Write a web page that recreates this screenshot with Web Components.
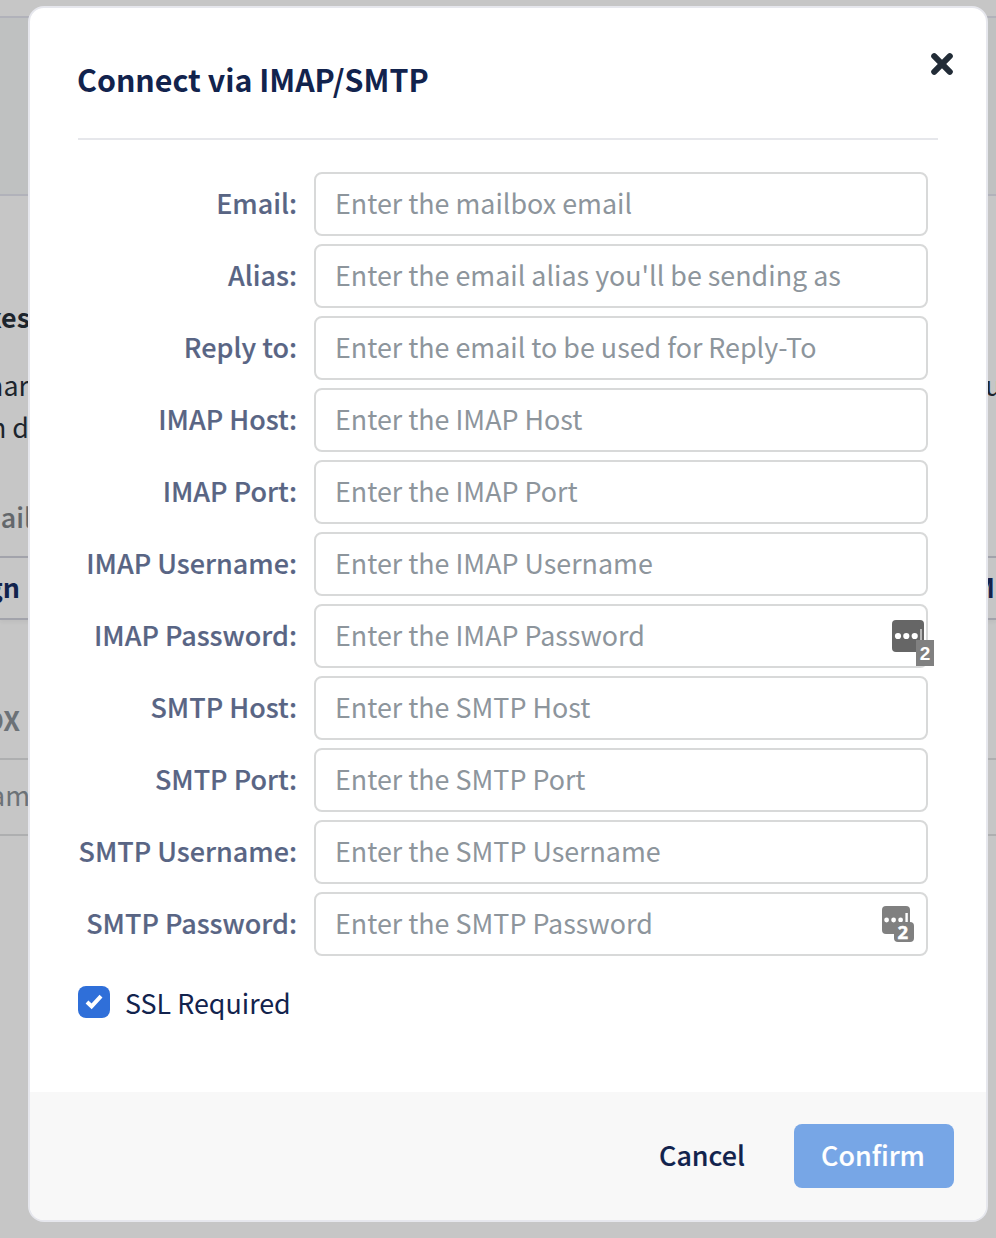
<!DOCTYPE html>
<html lang="en">
<head>
<meta charset="utf-8">
<title>Connect via IMAP/SMTP</title>
<style>
  html, body { margin: 0; height: 100%; overflow: hidden; }
  body {
    background: #c6c6c6;
    color: #12234d;
    font: 26.85px/42px "Noto Sans CJK SC", "Noto Sans", sans-serif;
  }
</style>
</head>
<body>
<mailbox-page></mailbox-page>

<connect-modal>
  <span slot="title">Connect via IMAP/SMTP</span>
  <form-field label="Email:">Enter the mailbox email</form-field>
  <form-field label="Alias:">Enter the email alias you'll be sending as</form-field>
  <form-field label="Reply to:">Enter the email to be used for Reply-To</form-field>
  <form-field label="IMAP Host:">Enter the IMAP Host</form-field>
  <form-field label="IMAP Port:">Enter the IMAP Port</form-field>
  <form-field label="IMAP Username:">Enter the IMAP Username</form-field>
  <form-field label="IMAP Password:">Enter the IMAP Password<password-badge slot="badge" kind="large"></password-badge></form-field>
  <form-field label="SMTP Host:">Enter the SMTP Host</form-field>
  <form-field label="SMTP Port:">Enter the SMTP Port</form-field>
  <form-field label="SMTP Username:">Enter the SMTP Username</form-field>
  <form-field label="SMTP Password:">Enter the SMTP Password<password-badge slot="badge" kind="small"></password-badge></form-field>
  <check-box slot="options">SSL Required</check-box>
  <modal-button slot="actions">Cancel</modal-button>
  <modal-button slot="actions" primary>Confirm</modal-button>
</connect-modal>

<script>
function define(name, html, setup) {
  const template = document.createElement('template');
  template.innerHTML = html;
  customElements.define(name, class extends HTMLElement {
    connectedCallback() {
      if (this.shadowRoot) return;
      const shadow = this.attachShadow({ mode: 'open' });
      shadow.appendChild(template.content.cloneNode(true));
      if (setup) setup(this, shadow);
    }
  });
}

// One line of the page behind the dialog, only its two ends are visible
define('page-row', `
  <style>
    :host { display: flex; justify-content: space-between; align-items: center; box-sizing: border-box; color: #1d252d; white-space: nowrap; }
    div { display: flex; }
    .start { width: 28px; justify-content: flex-end; }
    .end { width: 8px; }
  </style>
  <div class="start"><slot></slot></div>
  <div class="end"><slot name="end"></slot></div>
`);

define('mailbox-page', `
  <style>
    :host { display: flex; flex-direction: column; height: 100%; }
    .band { height: 180px; box-sizing: border-box; margin-top: 16px; background: #bfc1c1; border: solid #b1b2ba; border-width: 2px 0; }
    .heading { height: 42px; margin-top: 100px; font-weight: 700; }
    .text { height: 42px; }
    .heading + .text { margin-top: 26px; }
    .label { height: 42px; margin-top: 48px; color: #63676b; font-weight: 500; -webkit-text-stroke: .15px; }
    .tabs { height: 64px; margin-top: 18px; border: solid #a2a3ab; border-width: 2px 0; color: #12234d; font-weight: 700; padding-bottom: 2px; box-shadow: 0 2px 4px rgba(0, 0, 0, .05); }
    .column { height: 140px; border-bottom: 2px solid #aeafb0; color: #6c7277; font-weight: 700; padding-top: 62px; }
    .cell { height: 76px; border-bottom: 2px solid #aeafb0; color: #6c7277; padding-bottom: 4px; }
    .back { margin-right: 8px; }
    .over { margin-right: -2px; }
    .m { margin-left: -16px; }
    .u { margin-left: -3px; }
  </style>
  <div class="band"></div>
  <page-row class="heading"><span class="over">xes</span></page-row>
  <page-row class="text"><span style="margin-right:-1px">nar</span><span slot="end" class="u">u</span></page-row>
  <page-row class="text"><span style="margin-right:-1px">n d</span></page-row>
  <page-row class="label"><span style="margin-right:-4px">ail</span></page-row>
  <page-row class="tabs"><span class="back">gn</span><span slot="end" class="m">M</span></page-row>
  <page-row class="column"><span class="back">OX</span></page-row>
  <page-row class="cell"><span style="margin-right:-2px">am</span></page-row>
`);

define('connect-modal', `
  <style>
    :host {
      position: absolute; left: 28px; top: 6px;
      display: flex; flex-direction: column; box-sizing: border-box;
      width: 960px; height: 1216px;
      background: #fff; border: 2px solid #e6e7ed; border-radius: 16px; overflow: hidden;
    }
    header { display: flex; justify-content: space-between; height: 130px; margin: 0 48px; border-bottom: 2px solid #e6e7eb; }
    h1 { margin: 50px 0 0 -1px; font-size: 30.35px; line-height: 42px; font-weight: 700; }
    header svg { width: 24px; height: 24px; margin: 44px -16px 0 0; }
    main { flex: 1; padding: 32px 58px 0 48px; }
    .fields { display: flex; flex-direction: column; gap: 8px; margin-bottom: 30px; }
    footer { display: flex; justify-content: flex-end; align-items: center; gap: 22px; height: 128px; padding-right: 32px; background: #f8f8f8; }
  </style>
  <header>
    <h1><slot name="title"></slot></h1>
    <svg viewBox="0 0 24 24"><path d="M4.2 4.2 19.8 19.8M19.8 4.2 4.2 19.8" stroke="#222c37" stroke-width="6" stroke-linecap="round"/></svg>
  </header>
  <main>
    <div class="fields"><slot></slot></div>
    <slot name="options"></slot>
  </main>
  <footer><slot name="actions"></slot></footer>
`);

define('form-field', `
  <style>
    :host { display: flex; align-items: center; }
    label { flex: none; width: 219px; margin-right: 17px; padding-bottom: 2px; white-space: nowrap; color: #596584; font-size: 26.95px; font-weight: 500; -webkit-text-stroke: .15px; display: flex; justify-content: flex-end; }
    .box { position: relative; flex: 1; display: flex; align-items: center; box-sizing: border-box; height: 64px; padding: 0 19px 2px; border: 2px solid #d8d9d9; border-radius: 8px; color: #8d959c; white-space: nowrap; }
  </style>
  <label></label>
  <div class="box" role="textbox"><slot></slot><slot name="badge"></slot></div>
`, (host, shadow) => {
  shadow.querySelector('label').textContent = host.getAttribute('label');
});

// Password manager marker, laid over the right end of a field
define('password-badge', `
  <style>
    :host { position: absolute; right: -8px; top: 14px; display: block; width: 42px; height: 46px; }
    :host([kind="small"]) { right: 12px; top: 12px; width: 32px; height: 36px; }
    svg { display: none; width: 100%; height: 100%; }
    :host([kind="large"]) .large, :host([kind="small"]) .small { display: block; }
    text { fill: #fff; font-weight: 700; text-anchor: middle; }
  </style>
  <svg class="large" viewBox="0 0 42 46">
    <rect width="32" height="32" rx="4" fill="#666"/>
    <g fill="#fff"><circle cx="6" cy="16" r="3.1"/><circle cx="14.3" cy="16" r="3.1"/><circle cx="22.7" cy="16" r="3.1"/></g>
    <path d="M29 9v12" stroke="#ccc" stroke-width="1.6"/>
    <rect x="24" y="20" width="18" height="26" fill="#808080"/>
    <text x="33" y="40" font-size="19" font-family="Liberation Sans, sans-serif">2</text>
  </svg>
  <svg class="small" viewBox="0 0 32 36">
    <rect width="28" height="28" rx="4" fill="#808080"/>
    <g fill="#fff"><circle cx="4.6" cy="14" r="2.4"/><circle cx="11.6" cy="14" r="2.4"/><circle cx="18.6" cy="14" r="2.4"/></g>
    <path d="M24.6 7v9" stroke="#fff" stroke-width="2.4"/>
    <rect x="12" y="16" width="20" height="20" rx="4" fill="#808080"/>
    <text x="20.8" y="32.7" font-size="18.5" font-family="Open Sans, sans-serif" stroke="#fff" stroke-width=".5">2</text>
  </svg>
`);

define('check-box', `
  <style>
    :host { display: flex; align-items: center; gap: 15px; height: 32px; }
    svg { width: 32px; height: 32px; }
    span { margin-top: 1px; }
  </style>
  <svg viewBox="0 0 32 32"><rect width="32" height="32" rx="8" fill="#2f6fd9"/><path d="M9 16 13.6 20.3 23 10.2" fill="none" stroke="#fff" stroke-width="4"/></svg>
  <span><slot></slot></span>
`);

define('modal-button', `
  <style>
    button { display: flex; align-items: center; justify-content: center; height: 64px; padding: 0 27px 2px; border: 0; border-radius: 8px; background: none; color: #12234d; font: inherit; font-weight: 500; -webkit-text-stroke: .15px; }
    :host([primary]) button { width: 160px; padding: 0 2px 2px 0; background: #77a6e6; color: #fff; }
  </style>
  <button><slot></slot></button>
`);
</script>
</body>
</html>
